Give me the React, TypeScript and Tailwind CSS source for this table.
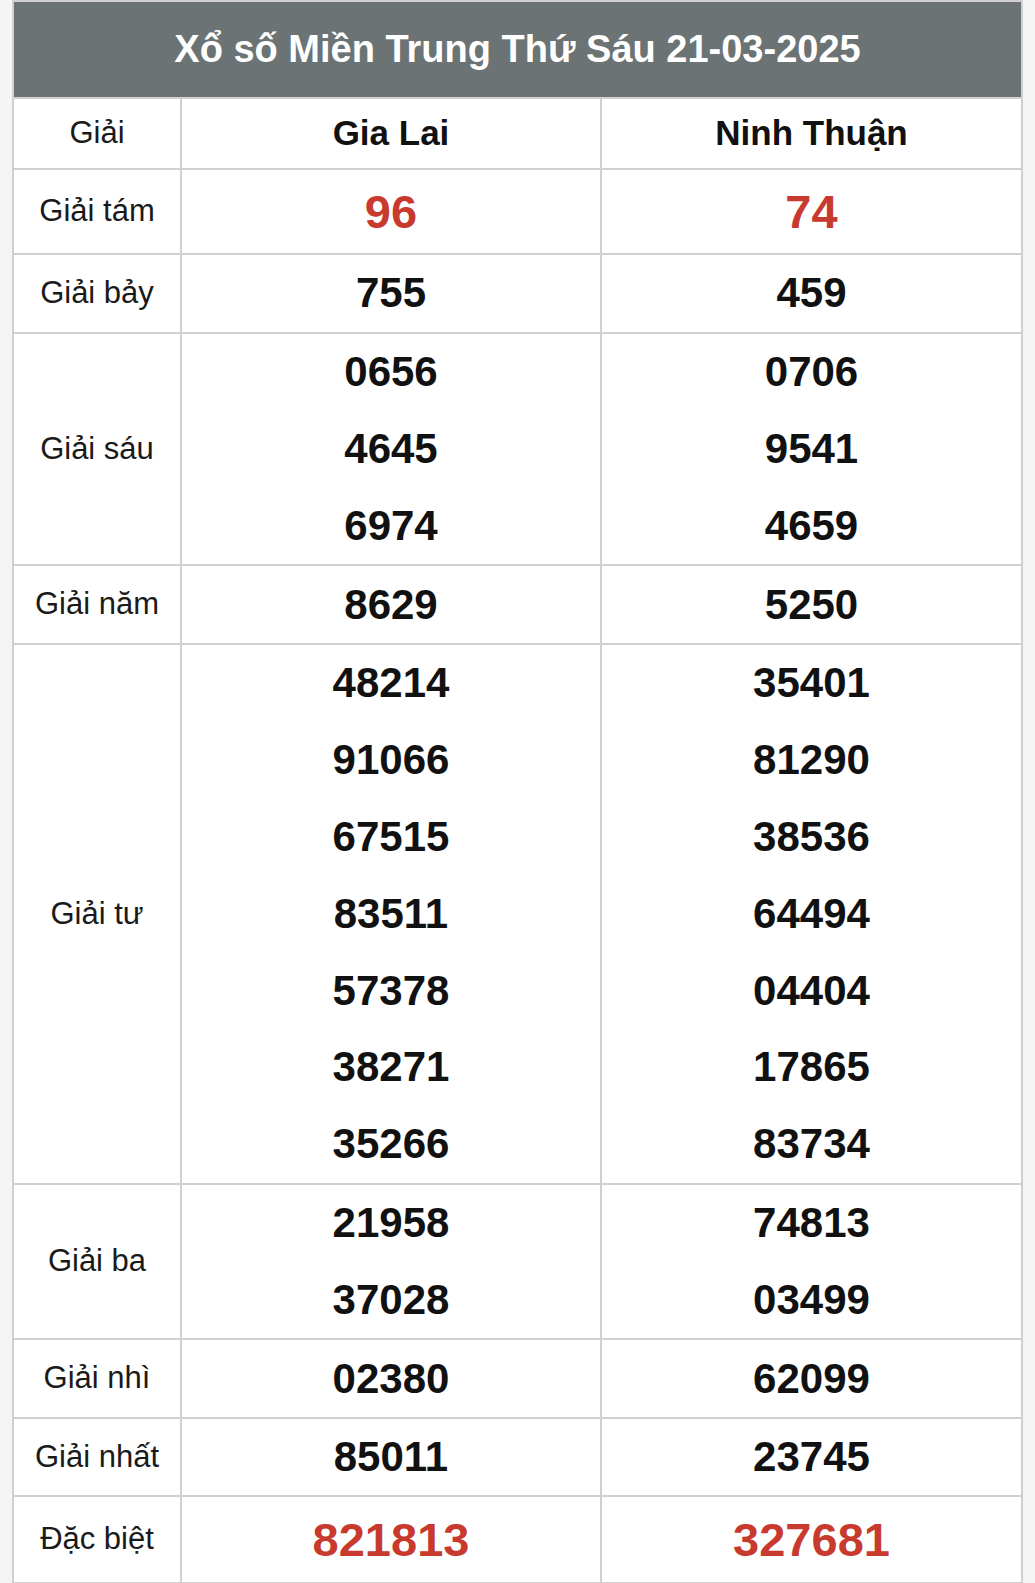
type Row = {
  label: string;
  a: string[];
  b: string[];
  red?: boolean;
  h?: string;
};

const rows: Row[] = [
  { label: "Giải tám", a: ["96"], b: ["74"], red: true, h: "h-[83px]" },
  { label: "Giải bảy", a: ["755"], b: ["459"] },
  { label: "Giải sáu", a: ["0656", "4645", "6974"], b: ["0706", "9541", "4659"] },
  { label: "Giải năm", a: ["8629"], b: ["5250"] },
  {
    label: "Giải tư",
    a: ["48214", "91066", "67515", "83511", "57378", "38271", "35266"],
    b: ["35401", "81290", "38536", "64494", "04404", "17865", "83734"],
  },
  { label: "Giải ba", a: ["21958", "37028"], b: ["74813", "03499"] },
  { label: "Giải nhì", a: ["02380"], b: ["62099"] },
  { label: "Giải nhất", a: ["85011"], b: ["23745"], h: "h-[76px]" },
  { label: "Đặc biệt", a: ["821813"], b: ["327681"], red: true, h: "h-[85px]" },
];

function Numbers({ items, red, h }: { items: string[]; red?: boolean; h?: string }) {
  return (
    <div className="flex flex-col">
      {items.map((n) => (
        <div
          key={n}
          className={
            "flex items-center justify-center font-bold leading-none " +
            (h ?? "h-[76.8px]") +
            " " +
            (red ? "text-[47px] text-[#c93a2e]" : "text-[42px] text-[#111]")
          }
        >
          {n}
        </div>
      ))}
    </div>
  );
}

export default function App() {
  return (
    <div
      className="min-h-screen bg-[#f5f5f5] px-[12px]"
      style={{ fontFamily: '"Liberation Sans", Arial, sans-serif' }}
    >
      <table className="w-[1009px] table-fixed border-collapse bg-white">
        <colgroup>
          <col className="w-[168px]" />
          <col className="w-[420px]" />
          <col className="w-[421px]" />
        </colgroup>
        <thead>
          <tr>
            <th
              colSpan={3}
              className="h-[97px] border-2 border-[#d0d0d0] bg-[#6b7374] p-0 text-center text-[38px] font-bold text-white"
            >
              Xổ số Miền Trung Thứ Sáu 21-03-2025
            </th>
          </tr>
          <tr>
            <th className="h-[71px] border-2 border-[#d0d0d0] p-0 text-[31px] font-normal text-[#1a1a1a]">
              Giải
            </th>
            <th className="border-2 border-[#d0d0d0] p-0 text-[35px] font-bold text-[#111]">
              Gia Lai
            </th>
            <th className="border-2 border-[#d0d0d0] p-0 text-[35px] font-bold text-[#111]">
              Ninh Thuận
            </th>
          </tr>
        </thead>
        <tbody>
          {rows.map((r) => (
            <tr key={r.label}>
              <td className="border-2 border-[#d0d0d0] p-0 text-center align-middle text-[31px] text-[#1a1a1a]">
                {r.label}
              </td>
              <td className="border-2 border-[#d0d0d0] p-0 align-middle">
                <Numbers items={r.a} red={r.red} h={r.h} />
              </td>
              <td className="border-2 border-[#d0d0d0] p-0 align-middle">
                <Numbers items={r.b} red={r.red} h={r.h} />
              </td>
            </tr>
          ))}
        </tbody>
      </table>
    </div>
  );
}
